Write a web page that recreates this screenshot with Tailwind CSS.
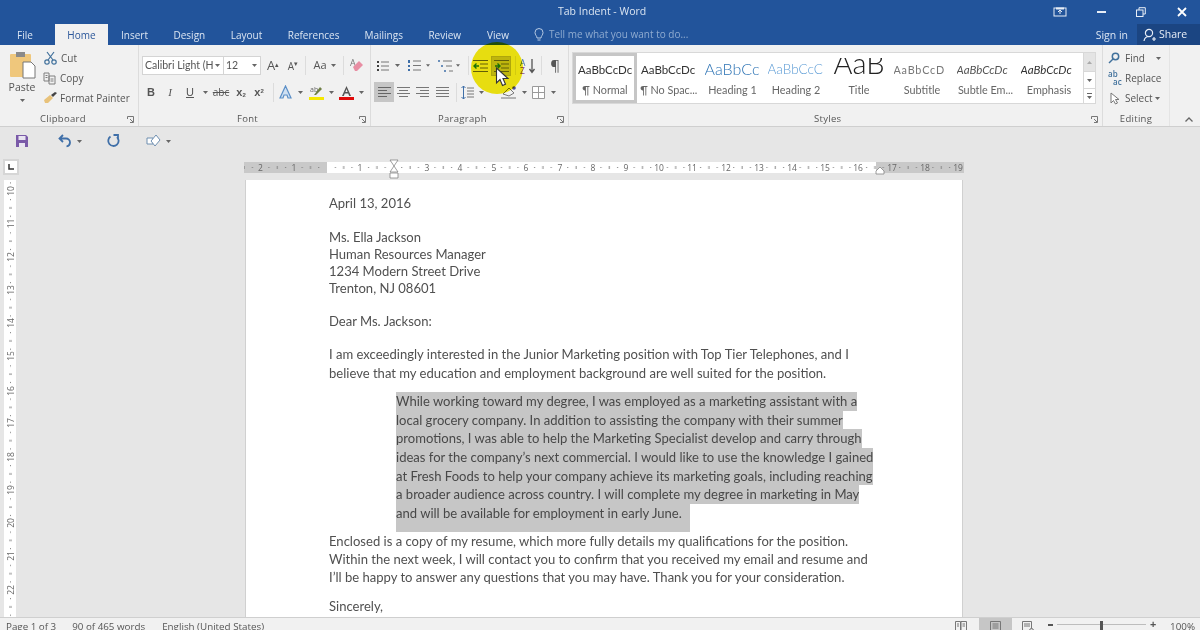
<!DOCTYPE html>
<html lang="en">
<head>
  <meta charset="UTF-8">
  <title>Tab Indent - Word</title>
  <script src="https://cdn.jsdelivr.net/npm/@tailwindcss/browser@4"></script>
</head>
<body class="m-0 bg-[#e6e6e6]">
<div class="relative w-[1200px] h-[630px] overflow-hidden flex flex-col font-['Open_Sans',sans-serif] text-[#555]">

  <!-- title bar -->
  <div class="h-[23px] shrink-0 bg-[#22549b] flex items-center text-[#dbe5f2] text-[10.5px]">
    <span class="ml-[558px]">Tab Indent - Word</span>
    <div class="ml-auto flex items-center">
      <svg class="w-[14px] h-[10px] mr-[30px]" viewBox="0 0 14 10" fill="none" stroke="#e8eef7"><rect x="1" y="1" width="12" height="8"/><path d="M7 7V3M5 5l2-2 2 2" /><path d="M3 1.500h8" stroke-width="2"/></svg>
      <div class="w-[9px] h-[2px] bg-[#e8eef7] mr-[30px]"></div>
      <svg class="w-[10px] h-[10px] mr-[31px]" viewBox="0 0 10 10" fill="none" stroke="#e8eef7"><rect x="0.500" y="3" width="6.500" height="6.500"/><path d="M3 3V.7h6.300V7H7" /></svg>
      <svg class="w-[10px] h-[10px] mr-[13px]" viewBox="0 0 10 10" stroke="#fff" stroke-width="1.800"><path d="M1 1l8 8M9 1l-8 8"/></svg>
    </div>
  </div>

  <!-- tabs -->
  <div class="h-[22px] shrink-0 bg-[#22549b] flex items-end text-[10px] text-[#dbe5f2]">
    <span class="h-[21px] leading-[23px] pl-[17px] w-[55px]">File</span>
    <span class="h-[21px] leading-[22px] w-[53px] text-center bg-[#f1f1f1] text-[#2b579a]">Home</span>
    <span class="h-[21px] leading-[22px] px-[13px]">Insert</span>
    <span class="h-[21px] leading-[22px] px-[12.500px]">Design</span>
    <span class="h-[21px] leading-[22px] px-[13px]">Layout</span>
    <span class="h-[21px] leading-[22px] px-[12.500px]">References</span>
    <span class="h-[21px] leading-[22px] px-[12.500px]">Mailings</span>
    <span class="h-[21px] leading-[22px] px-[13px]">Review</span>
    <span class="h-[21px] leading-[22px] px-[13px]">View</span>
    <div class="h-[21px] flex items-center ml-[12px] text-[#8fabd0]">
      <svg class="w-[10px] h-[14px] mr-[5px]" viewBox="0 0 10 14" fill="none" stroke="#b7cae3"><path d="M3 10C3 8 1 7 1 4.500a4 4 0 018 0C9 7 7 8 7 10zM3.500 12h3"/></svg>
      <span class="text-[10px]">Tell me what you want to do...</span>
    </div>
    <span class="ml-auto h-[21px] leading-[22px] mr-[9px] text-[10.500px]">Sign in</span>
    <div class="h-[21px] w-[63px] bg-[#1b4582] flex items-center pl-[6px] text-[#e8eef7] text-[10.500px]">
      <svg class="w-[13px] h-[14px] mr-[3px]" viewBox="0 0 13 14" fill="none" stroke="#e8eef7" stroke-width="1.200"><circle cx="6" cy="5" r="3.600"/><path d="M1 13c.500-3 2.500-4.500 5-4.500M9 11h4M11 9v4"/></svg>
      <span>Share</span>
    </div>
  </div>

  <!-- ribbon -->
  <div class="h-[82px] shrink-0 bg-[#f1f1f1] border-b border-[#cfcfcf] flex text-[10px]">

    <!-- clipboard -->
    <div class="w-[139px] shrink-0 border-r border-[#dcdcdc] flex flex-col">
      <div class="h-[67px] flex">
        <div class="w-[44px] flex flex-col items-center pt-[6px]">
          <svg class="w-[27px] h-[28px]" viewBox="0 0 27 28"><rect x="1" y="3" width="21" height="23" rx="1" fill="#efc77c"/><rect x="7" y="1" width="9" height="5" fill="#8a8a8a"/><path d="M14 11h8l4 4v12H14z" fill="#fff" stroke="#777"/></svg>
          <span class="leading-[15px] text-[10.500px] mt-[1px]">Paste</span>
          <svg class="w-[5px] h-[3px] mt-[4px]" viewBox="0 0 5 3"><path d="M0 0h5L2.500 3z" fill="#666"/></svg>
        </div>
        <div class="flex flex-col pt-[5px] gap-[4px]">
          <div class="h-[16px] flex items-center gap-[4px]">
            <svg class="w-[13px] h-[14px]" viewBox="0 0 13 14" fill="none" stroke="#41719c" stroke-width="1.200"><circle cx="3" cy="11" r="2.200"/><circle cx="10" cy="11" r="2.200"/><path d="M4 9L10 1M9 9L3 1"/></svg>
            <span>Cut</span>
          </div>
          <div class="h-[16px] flex items-center gap-[4px]">
            <svg class="w-[13px] h-[13px] -ml-[1px]" viewBox="0 0 13 13" fill="none" stroke="#7f7f7f"><path d="M1 1h5v8H1zM6 4h6v8H6zM2.500 3.500h2M2.500 5.500h2M7.500 7h3M7.500 9h3"/></svg>
            <span>Copy</span>
          </div>
          <div class="h-[16px] flex items-center gap-[3px] -ml-[1px]">
            <svg class="w-[14px] h-[12px]" viewBox="0 0 14 12"><path d="M1 8l6-5 3 3-5 5H2z" fill="#e8c27a"/><path d="M8 3l4-3 2 1-4 4z" fill="#444"/></svg>
            <span>Format Painter</span>
          </div>
        </div>
      </div>
      <div class="h-[14px] flex items-center text-[9.500px]">
        <span class="ml-[40px] tracking-[0.3px]">Clipboard</span>
        <svg class="w-[7px] h-[7px] ml-auto mr-[4px]" viewBox="0 0 7 7" fill="none" stroke="#777"><path d="M.5 3V.5H6.500V6.500H3M3 3l3 3"/></svg>
      </div>
    </div>

    <!-- font -->
    <div class="w-[232px] shrink-0 border-r border-[#dcdcdc] flex flex-col">
      <div class="h-[67px] flex flex-col">
        <div class="h-[19px] mt-[11px] ml-[3px] flex items-center">
          <div class="w-[82px] h-[19px] bg-white border border-[#d4d4d4] flex items-center pl-[2px] justify-between pr-[3px]">
            <span class="font-['Lato',sans-serif] text-[10.500px] whitespace-nowrap">Calibri Light (H</span>
            <svg class="w-[5px] h-[3px]" viewBox="0 0 5 3"><path d="M0 0h5L2.500 3z" fill="#666"/></svg>
          </div>
          <div class="w-[37px] h-[19px] bg-white border border-l-0 border-[#d4d4d4] flex items-center pl-[2px] justify-between pr-[3px]">
            <span class="font-['Lato',sans-serif] text-[10.500px]">12</span>
            <svg class="w-[5px] h-[3px]" viewBox="0 0 5 3"><path d="M0 0h5L2.500 3z" fill="#666"/></svg>
          </div>
          <span class="w-[22px] ml-[1px] text-center text-[13px] leading-none">A<sup class="text-[7px]">▴</sup></span>
          <span class="w-[18px] text-center text-[10px] leading-none">A<sup class="text-[7px]">▾</sup></span>
          <div class="w-px h-[19px] bg-[#dcdcdc] ml-[3px]"></div>
          <span class="w-[22px] text-center ml-[3px] text-[11px]">Aa</span>
          <svg class="w-[5px] h-[3px]" viewBox="0 0 5 3"><path d="M0 0h5L2.500 3z" fill="#666"/></svg>
          <div class="w-px h-[19px] bg-[#dcdcdc] ml-[7px]"></div>
          <svg class="w-[14px] h-[15px] ml-[6px]" viewBox="0 0 14 15"><text x="0" y="8" font-size="9" fill="#777" font-family="Open Sans">A</text><path d="M3 9l6-6 4 4-6 6H5z" fill="#e88ea3"/></svg>
        </div>
        <div class="h-[20px] mt-[7px] ml-[3px] flex items-center text-center text-[11px]">
          <b class="w-[18px] font-['Liberation_Sans',sans-serif]">B</b>
          <i class="w-[20px] font-['Liberation_Serif',serif]">I</i>
          <u class="w-[20px] font-['Liberation_Sans',sans-serif]">U</u>
          <span class="w-[10px] flex justify-center"><svg class="w-[5px] h-[3px]" viewBox="0 0 5 3"><path d="M0 0h5L2.500 3z" fill="#666"/></svg></span>
          <s class="w-[22px] text-[10px]">abc</s>
          <span class="w-[18px] font-bold font-['Liberation_Sans',sans-serif]">x<sub class="text-[6px]">2</sub></span>
          <span class="w-[18px] font-bold font-['Liberation_Sans',sans-serif]">x<sup class="text-[6px]">2</sup></span>
          <div class="w-px h-[19px] bg-[#dcdcdc] ml-[5px]"></div>
          <span class="w-[22px] flex justify-center"><svg class="w-[13px] h-[14px]" viewBox="0 0 13 14" fill="#cfe0f2" stroke="#5b8fc7" stroke-width="1.200"><path d="M6.500 1L1 13h3l1-3h3l1 3h3z"/></svg></span>
          <span class="w-[8px] flex justify-center"><svg class="w-[5px] h-[3px]" viewBox="0 0 5 3"><path d="M0 0h5L2.500 3z" fill="#666"/></svg></span>
          <span class="w-[24px] flex justify-center"><svg class="w-[15px] h-[15px]" viewBox="0 0 15 15"><text x="1" y="7" font-size="7" fill="#666" font-family="Open Sans">ab</text><path d="M5 10l6-8 2 2-6 6z" fill="#6f7f45"/><rect y="12" width="15" height="3" fill="#f6e800"/></svg></span>
          <span class="w-[6px] flex justify-center"><svg class="w-[5px] h-[3px]" viewBox="0 0 5 3"><path d="M0 0h5L2.500 3z" fill="#666"/></svg></span>
          <span class="w-[24px] flex justify-center"><svg class="w-[15px] h-[15px]" viewBox="0 0 15 15"><path d="M7.500 1L3 11h1.800l1-2.500h3.400l1 2.500H12zM6.400 7l1.100-3 1.100 3z" fill="#555" fill-rule="evenodd"/><rect y="12" width="15" height="3" fill="#e00b0b"/></svg></span>
          <span class="w-[6px] flex justify-center"><svg class="w-[5px] h-[3px]" viewBox="0 0 5 3"><path d="M0 0h5L2.500 3z" fill="#666"/></svg></span>
        </div>
      </div>
      <div class="h-[14px] flex items-center text-[9.500px]">
        <span class="ml-[98px] tracking-[0.3px]">Font</span>
        <svg class="w-[7px] h-[7px] ml-auto mr-[4px]" viewBox="0 0 7 7" fill="none" stroke="#777"><path d="M.5 3V.5H6.500V6.500H3M3 3l3 3"/></svg>
      </div>
    </div>

    <!-- paragraph -->
    <div class="w-[198px] shrink-0 border-r border-[#dcdcdc] flex flex-col">
      <div class="h-[67px] flex flex-col">
        <div class="h-[19px] mt-[11px] flex items-center">
          <span class="w-[24px] flex justify-center"><svg class="w-[13px] h-[12px]" viewBox="0 0 13 12" stroke="#777"><path d="M5 2h8M5 6h8M5 10h8"/><path d="M1 2h2M1 6h2M1 10h2" stroke="#3f3f3f" stroke-width="2"/></svg></span>
          <span class="w-[6px] flex justify-center"><svg class="w-[5px] h-[3px]" viewBox="0 0 5 3"><path d="M0 0h5L2.500 3z" fill="#666"/></svg></span>
          <span class="w-[28px] flex justify-center"><svg class="w-[13px] h-[13px]" viewBox="0 0 13 13" stroke="#777"><path d="M5 2h8M5 6.500h8M5 11h8"/><path d="M1 1v3M1 6v2M1 10v2" stroke="#3f6fa8" stroke-width="2"/></svg></span>
          <span class="w-[4px] flex justify-center -ml-[2px]"><svg class="w-[5px] h-[3px]" viewBox="0 0 5 3"><path d="M0 0h5L2.500 3z" fill="#666"/></svg></span>
          <span class="w-[28px] ml-[3px] flex justify-center"><svg class="w-[17px] h-[14px]" viewBox="0 0 17 14" stroke="#777"><path d="M5 2h9M8 7h6M11 12h4"/><path d="M1 1v2M4 6v2M7 11v2" stroke="#3f6fa8" stroke-width="1.500"/></svg></span>
          <span class="w-[4px] flex justify-center -ml-[5px]"><svg class="w-[5px] h-[3px]" viewBox="0 0 5 3"><path d="M0 0h5L2.500 3z" fill="#666"/></svg></span>
          <div class="w-px h-[19px] bg-[#dcdcdc] ml-[8px]"></div>
          <span class="w-[19px] h-[19px] ml-[3px] flex items-center justify-center"><svg class="w-[15px] h-[12px]" viewBox="0 0 15 12" stroke="#666"><path d="M0 .5h15M7 4h8M7 8h8M0 11.500h15"/><path d="M6 6H1M3.500 3.500L1 6l2.500 2.500" stroke="#1a7a3c" stroke-width="1.400" fill="none"/></svg></span>
          <span class="w-[20px] h-[20px] ml-[1px] bg-[#c6c6c6] border border-[#b5b5b5] flex items-center justify-center"><svg class="w-[15px] h-[12px]" viewBox="0 0 15 12" stroke="#666"><path d="M0 .5h15M7 4h8M7 8h8M0 11.500h15"/><path d="M1 6h5M3.500 3.500L6 6 3.500 8.500" stroke="#1a7a3c" stroke-width="1.400" fill="none"/></svg></span>
          <div class="w-px h-[19px] bg-[#dcdcdc] ml-[4px]"></div>
          <span class="w-[26px] flex justify-center"><svg class="w-[17px] h-[16px]" viewBox="0 0 17 16"><text x="0" y="7.500" font-size="8.500" fill="#3f6fa8" font-family="Open Sans">A</text><text x="0" y="15.500" font-size="8.500" fill="#7b3fa0" font-family="Open Sans">Z</text><path d="M12 1v13M9.500 11l2.500 3.500 2.500-3.500" stroke="#555" fill="none" stroke-width="1.300"/></svg></span>
          <div class="w-px h-[19px] bg-[#dcdcdc]"></div>
          <span class="w-[26px] text-center text-[15px] leading-none">¶</span>
        </div>
        <div class="h-[20px] mt-[7px] flex items-center">
          <span class="w-[20px] h-[20px] ml-[3px] bg-[#c6c6c6] flex items-center justify-center"><svg class="w-[13px] h-[10px]" viewBox="0 0 13 10" stroke="#666"><path d="M0 .5h13M0 3.500h9M0 6.500h13M0 9.500h9"/></svg></span>
          <span class="w-[19px] flex justify-center"><svg class="w-[13px] h-[10px]" viewBox="0 0 13 10" stroke="#777"><path d="M0 .5h13M2 3.500h9M0 6.500h13M2 9.500h9"/></svg></span>
          <span class="w-[19px] flex justify-center"><svg class="w-[13px] h-[10px]" viewBox="0 0 13 10" stroke="#777"><path d="M0 .5h13M4 3.500h9M0 6.500h13M4 9.500h9"/></svg></span>
          <span class="w-[20px] flex justify-center"><svg class="w-[13px] h-[10px]" viewBox="0 0 13 10" stroke="#777"><path d="M0 .5h13M0 3.500h13M0 6.500h13M0 9.500h13"/></svg></span>
          <div class="w-px h-[19px] bg-[#dcdcdc] ml-[4px]"></div>
          <span class="w-[21px] flex justify-center"><svg class="w-[13px] h-[15px]" viewBox="0 0 13 15" stroke="#777"><path d="M6 3h7M6 6h7M6 9h7M6 12h7"/><path d="M2.500 1v13M.5 3l2-2 2 2M.5 12l2 2 2-2" stroke="#3f6fa8" fill="none"/></svg></span>
          <span class="w-[6px] flex justify-center"><svg class="w-[5px] h-[3px]" viewBox="0 0 5 3"><path d="M0 0h5L2.500 3z" fill="#666"/></svg></span>
          <span class="w-[33px] ml-[1px] flex justify-end"><svg class="w-[18px] h-[14px]" viewBox="0 0 18 14" fill="none" stroke="#777"><path d="M1 13h15M3 9l6-6 5 5-5 3z"/><circle cx="14" cy="3" r="1.800" fill="#4a4aa0" stroke="none"/></svg></span>
          <span class="w-[12px] flex justify-center"><svg class="w-[5px] h-[3px]" viewBox="0 0 5 3"><path d="M0 0h5L2.500 3z" fill="#666"/></svg></span>
          <span class="w-[16px] flex justify-center"><svg class="w-[13px] h-[13px]" viewBox="0 0 13 13" fill="#fff" stroke="#9a9a9a"><path d="M.5.500h12v12H.500zM6.500.500v12M.5 6.500h12"/></svg></span>
          <span class="w-[14px] flex justify-center"><svg class="w-[5px] h-[3px]" viewBox="0 0 5 3"><path d="M0 0h5L2.500 3z" fill="#666"/></svg></span>
        </div>
      </div>
      <div class="h-[14px] flex items-center text-[9.500px]">
        <span class="ml-[67px] tracking-[0.3px]">Paragraph</span>
        <svg class="w-[7px] h-[7px] ml-auto mr-[4px]" viewBox="0 0 7 7" fill="none" stroke="#777"><path d="M.5 3V.5H6.500V6.500H3M3 3l3 3"/></svg>
      </div>
    </div>

    <!-- styles -->
    <div class="w-[534px] shrink-0 border-r border-[#dcdcdc] flex flex-col">
      <div class="h-[67px] flex pt-[7px] pl-[3px]">
        <div class="h-[52px] w-[512px] bg-white border border-[#d8d8d8] flex font-['Lato',sans-serif] text-[10.800px] text-center">
          <div class="w-[64px] shrink-0 border-[3px] border-[#c6c6c6] flex flex-col text-[#333]">
            <div class="h-[26px] leading-[28px] overflow-hidden whitespace-nowrap pl-[2px] text-left text-[11.500px]">AaBbCcDc</div>
            <div class="leading-[15px] text-[#666]">¶ Normal</div>
          </div>
          <div class="w-[63.500px] shrink-0 flex flex-col pt-[3px] text-[#333]">
            <div class="h-[26px] leading-[28px] overflow-hidden whitespace-nowrap mx-[4px] text-left text-[11.500px]">AaBbCcDc</div>
            <div class="leading-[15px] text-[#666]">¶ No Spac...</div>
          </div>
          <div class="w-[64px] shrink-0 flex flex-col pt-[3px] text-[#2e74b5]">
            <div class="h-[26px] leading-[26px] overflow-hidden whitespace-nowrap mx-[4px] text-left text-[16px] font-light">AaBbCc</div>
            <div class="leading-[15px] text-[#666]">Heading 1</div>
          </div>
          <div class="w-[63px] shrink-0 flex flex-col pt-[3px] text-[#5b9bd5]">
            <div class="h-[26px] leading-[27px] overflow-hidden whitespace-nowrap mx-[3px] text-left text-[13.500px] font-light">AaBbCcC</div>
            <div class="leading-[15px] text-[#666]">Heading 2</div>
          </div>
          <div class="w-[63px] shrink-0 flex flex-col pt-[5px] text-[#222]">
            <div class="h-[24px] leading-[9px] overflow-hidden whitespace-nowrap text-[29px] font-light">AaB</div>
            <div class="leading-[15px] text-[#666]">Title</div>
          </div>
          <div class="w-[63px] shrink-0 flex flex-col pt-[3px] text-[#777]">
            <div class="h-[26px] leading-[28px] overflow-hidden whitespace-nowrap mx-[3px] text-left tracking-[0.8px]">AaBbCcD</div>
            <div class="leading-[15px] text-[#666]">Subtitle</div>
          </div>
          <div class="w-[64px] shrink-0 flex flex-col pt-[3px] text-[#555] italic">
            <div class="h-[26px] leading-[28px] overflow-hidden whitespace-nowrap mx-[3px] text-left text-[11.500px]">AaBbCcDc</div>
            <div class="leading-[15px] text-[#666] not-italic">Subtle Em...</div>
          </div>
          <div class="w-[63px] shrink-0 flex flex-col pt-[3px] text-[#333] italic">
            <div class="h-[26px] leading-[28px] overflow-hidden whitespace-nowrap mx-[3px] text-left text-[11.500px]">AaBbCcDc</div>
            <div class="leading-[15px] text-[#666] not-italic">Emphasis</div>
          </div>
        </div>
        <div class="w-[12px] h-[52px] flex flex-col border border-l-0 border-[#d8d8d8]">
          <div class="h-[19px] bg-[#e4e4e4] border-b border-[#d8d8d8] flex items-center justify-center"><svg class="w-[5px] h-[3px]" viewBox="0 0 5 3"><path d="M0 3h5L2.500 0z" fill="#aaa"/></svg></div>
          <div class="h-[17px] bg-white border-b border-[#d8d8d8] flex items-center justify-center"><svg class="w-[5px] h-[3px]" viewBox="0 0 5 3"><path d="M0 0h5L2.500 3z" fill="#666"/></svg></div>
          <div class="flex-1 bg-white flex items-center justify-center"><svg class="w-[5px] h-[6px]" viewBox="0 0 5 6"><path d="M0 3h5L2.500 6zM0 0h5v1H0z" fill="#666"/></svg></div>
        </div>
      </div>
      <div class="h-[14px] flex items-center text-[9.500px]">
        <span class="ml-[245px] tracking-[0.3px]">Styles</span>
        <svg class="w-[7px] h-[7px] ml-auto mr-[4px]" viewBox="0 0 7 7" fill="none" stroke="#777"><path d="M.5 3V.5H6.500V6.500H3M3 3l3 3"/></svg>
      </div>
    </div>

    <!-- editing -->
    <div class="w-[67px] shrink-0 border-r border-[#e4e4e4] flex flex-col">
      <div class="h-[67px] flex flex-col pt-[5px] pl-[5px] gap-[4px]">
        <div class="h-[16px] flex items-center gap-[5px]">
          <svg class="w-[12px] h-[12px]" viewBox="0 0 12 12" fill="none" stroke="#41719c" stroke-width="1.500"><circle cx="7.500" cy="4.500" r="3.200"/><path d="M5 7l-4 4"/></svg>
          <span>Find</span>
          <svg class="w-[5px] h-[3px] ml-[6px]" viewBox="0 0 5 3"><path d="M0 0h5L2.500 3z" fill="#666"/></svg>
        </div>
        <div class="h-[16px] flex items-center gap-[2px]">
          <span class="w-[15px] text-[8px] leading-[8px] text-[#41719c] font-semibold">ab<br><span class="pl-[5px]">ac</span></span>
          <span>Replace</span>
        </div>
        <div class="h-[16px] flex items-center gap-[5px] pl-[2px]">
          <svg class="w-[10px] h-[13px]" viewBox="0 0 10 13" fill="#fff" stroke="#777"><path d="M1 1v10l2.500-2.500L5.500 12l2-1-2-3.500H9z"/></svg>
          <span>Select</span>
          <svg class="w-[5px] h-[3px] -ml-[3px]" viewBox="0 0 5 3"><path d="M0 0h5L2.500 3z" fill="#666"/></svg>
        </div>
      </div>
      <div class="h-[14px] flex items-center justify-center text-[9.500px] tracking-[0.3px]">Editing</div>
    </div>

    <div class="flex-1 flex items-end justify-end pb-[4px] pr-[7px]">
      <svg class="w-[8px] h-[5px]" viewBox="0 0 8 5" fill="none" stroke="#666" stroke-width="1.300"><path d="M.5 4.500L4 1l3.500 3.500"/></svg>
    </div>
  </div>

  <!-- quick access -->
  <div class="h-[28px] shrink-0 flex items-center pl-[15px]">
    <svg class="w-[14px] h-[14px]" viewBox="0 0 14 14"><path d="M1 1h10l2 2v10H1z" fill="#7a5aa8"/><rect x="3.500" y="2" width="7" height="4" fill="#e8e4f0"/><rect x="4" y="9" width="6" height="4" fill="#e8e4f0"/></svg>
    <svg class="w-[14px] h-[14px] ml-[29px]" viewBox="0 0 14 14" fill="none" stroke="#3f6fa8" stroke-width="1.800"><path d="M5 1L1.500 4.500 5 8M2 4.500h6a4 4 0 014 4c0 2-1.500 3.500-3.500 4"/></svg>
    <svg class="w-[5px] h-[3px] ml-[5px]" viewBox="0 0 5 3"><path d="M0 0h5L2.500 3z" fill="#666"/></svg>
    <svg class="w-[13px] h-[14px] ml-[25px]" viewBox="0 0 13 14" fill="none" stroke="#3f6fa8" stroke-width="1.800"><path d="M3.500 2.500A5.200 5.200 0 1010 3M6.500 1h4.500v4.500"/></svg>
    <svg class="w-[15px] h-[14px] ml-[26px]" viewBox="0 0 15 14" fill="#fff" stroke="#6f8fb0"><path d="M1 4h6v6H1z"/><path d="M10 1l4 5-5 6-4-5z" /></svg>
    <svg class="w-[5px] h-[3px] ml-[5px]" viewBox="0 0 5 3"><path d="M0 0h5L2.500 3z" fill="#666"/></svg>
  </div>

  <!-- ruler row -->
  <div class="h-[25px] shrink-0 flex items-start pt-[4px]">
    <div class="w-[16px] h-[16px] ml-[3px] bg-[#d6d6d6] flex items-center justify-center">
      <div class="w-[12px] h-[12px] bg-white flex items-center justify-center"><svg class="w-[6px] h-[6px]" viewBox="0 0 6 6" fill="none" stroke="#333" stroke-width="1.500"><path d="M1 0v5h5"/></svg></div>
    </div>
    <svg class="w-[724px] h-[18px] ml-[225px] mt-[1px] overflow-visible" viewBox="0 0 724 18" font-family="Open Sans" font-size="8.500" fill="#666" text-anchor="middle">
      <defs>
        <pattern id="hticks" x="16.500" y="0" width="33.200" height="13" patternUnits="userSpaceOnUse">
          <rect x="8" y="7" width="1" height="1" fill="#777"/><rect x="16.300" y="6" width="1" height="3" fill="#888"/><rect x="24.600" y="7" width="1" height="1" fill="#777"/>
        </pattern>
      </defs>
      <rect width="720" height="11" y="2" fill="#c9c9c9"/>
      <rect x="83" width="549" height="11" y="2" fill="#fff"/>
      <rect width="720" height="13" y="0" fill="url(#hticks)"/>
      <g transform="translate(0 10.500)">
        <text x="16.500">2</text><text x="50">1</text><text x="116">1</text><text x="183">3</text><text x="216">4</text><text x="250">5</text><text x="282">6</text><text x="316">7</text><text x="349">8</text><text x="382">9</text><text x="415">10</text><text x="448">11</text><text x="482">12</text><text x="515">13</text><text x="548">14</text><text x="581">15</text><text x="614">16</text><text x="648">17</text><text x="681">18</text><text x="714">19</text>
      </g>
      <path d="M146 0h8l-4 6 4 6h-8l4-6zM146 13h8v5h-8z" fill="#fff" stroke="#777" stroke-width=".7"/>
      <path d="M632 11l4-4 4 4v3h-8z" fill="#fff" stroke="#777" stroke-width=".7"/>
    </svg>
  </div>

  <!-- document area -->
  <div class="flex-1 min-h-0 flex overflow-hidden">
    <svg class="w-[12px] h-[437px] ml-[4px] shrink-0" viewBox="0 0 12 437" font-family="Open Sans" font-size="8.500" fill="#666" text-anchor="middle">
      <defs>
        <pattern id="vticks" x="0" y="11.200" width="12" height="33.250" patternUnits="userSpaceOnUse">
          <rect x="6" y="8" width="1" height="1" fill="#777"/><rect x="5" y="16.200" width="3" height="1" fill="#888"/><rect x="6" y="24.500" width="1" height="1" fill="#777"/>
        </pattern>
      </defs>
      <rect width="12" height="437" fill="#fff"/>
      <rect width="12" height="437" fill="url(#vticks)"/>
      <text transform="translate(9.500 11) rotate(-90)">10</text><text transform="translate(9.500 43.500) rotate(-90)">11</text><text transform="translate(9.500 77) rotate(-90)">12</text><text transform="translate(9.500 110) rotate(-90)">13</text><text transform="translate(9.500 143) rotate(-90)">14</text><text transform="translate(9.500 176) rotate(-90)">15</text><text transform="translate(9.500 211) rotate(-90)">16</text><text transform="translate(9.500 243) rotate(-90)">17</text><text transform="translate(9.500 277) rotate(-90)">18</text><text transform="translate(9.500 310) rotate(-90)">19</text><text transform="translate(9.500 343) rotate(-90)">20</text><text transform="translate(9.500 376) rotate(-90)">21</text><text transform="translate(9.500 410) rotate(-90)">22</text>
    </svg>

    <div class="w-[718px] ml-[229px] shrink-0 bg-white border-l border-r border-[#d0d0d0] pl-[83px] pt-[14px] font-['Lato',sans-serif] text-[13.050px] text-[#505050] whitespace-nowrap">
      <p class="leading-[18px]">April 13, 2016</p>
      <div class="mt-[17px] leading-[17px]">
        <p>Ms. Ella Jackson</p>
        <p>Human Resources Manager</p>
        <p>1234 Modern Street Drive</p>
        <p>Trenton, NJ 08601</p>
      </div>
      <p class="mt-[16px] leading-[17px]">Dear Ms. Jackson:</p>
      <div class="mt-[15px] leading-[18.500px]">
        <p>I am exceedingly interested in the Junior Marketing position with Top Tier Telephones, and I</p>
        <p>believe that my education and employment background are well suited for the position.</p>
      </div>
      <div class="mt-[10px] ml-[67px] leading-[18.670px] text-[#484848]">
        <p class="w-fit bg-[#c6c6c6]">While working toward my degree, I was employed as a marketing assistant with a</p>
        <p class="w-fit bg-[#c6c6c6]">local grocery company. In addition to assisting the company with their summer</p>
        <p class="w-fit bg-[#c6c6c6]">promotions, I was able to help the Marketing Specialist develop and carry through</p>
        <p class="w-fit bg-[#c6c6c6]">ideas for the company’s next commercial. I would like to use the knowledge I gained</p>
        <p class="w-fit bg-[#c6c6c6]">at Fresh Foods to help your company achieve its marketing goals, including reaching</p>
        <p class="w-fit bg-[#c6c6c6]">a broader audience across country. I will complete my degree in marketing in May</p>
        <p class="w-fit bg-[#c6c6c6] pb-[9px] pr-[8px]">and will be available for employment in early June.</p>
      </div>
      <div class="leading-[18px]">
        <p>Enclosed is a copy of my resume, which more fully details my qualifications for the position.</p>
        <p>Within the next week, I will contact you to confirm that you received my email and resume and</p>
        <p>I’ll be happy to answer any questions that you may have. Thank you for your consideration.</p>
      </div>
      <p class="mt-[11px] leading-[18px]">Sincerely,</p>
    </div>
  </div>

  <!-- status bar -->
  <div class="h-[13px] shrink-0 bg-[#f1f1f1] border-t border-[#cfcfcf] flex items-start text-[9.800px] leading-[17px] text-[#555] overflow-hidden">
    <span class="ml-[6px]">Page 1 of 3</span>
    <span class="ml-[16px]">90 of 465 words</span>
    <span class="ml-[17px]">English (United States)</span>
    <div class="ml-auto flex items-start h-[13px]">
      <svg class="w-[12px] h-[12px] mt-[3px]" viewBox="0 0 12 12" fill="none" stroke="#777"><path d="M.5.500h5v11h-5zM6 .5h5.500v11H6zM2 3h2M2 5h2M7.500 3h2.500M7.500 5h2.500"/></svg>
      <div class="w-[33px] h-[13px] ml-[12px] bg-[#c6c6c6] flex justify-center"><svg class="w-[11px] h-[12px] mt-[3px]" viewBox="0 0 11 12" fill="none" stroke="#777"><path d="M.5.500h10v11H.5zM2.500 3h6M2.500 5h6M2.500 7h6"/></svg></div>
      <svg class="w-[12px] h-[12px] mt-[3px] ml-[10px]" viewBox="0 0 12 12" fill="none" stroke="#777"><path d="M.5.500h9v11H.5zM2 3h6M2 5h6"/><circle cx="9.500" cy="9.500" r="2" fill="#ddd"/></svg>
      <div class="w-[5px] h-[1.500px] bg-[#555] mt-[6px] ml-[14px]"></div>
      <div class="w-[89px] h-[1px] bg-[#bdbdbd] mt-[6px] ml-[4px] flex justify-center"><div class="w-[3px] h-[12px] -mt-[3px] bg-[#555]"></div></div>
      <span class="ml-[3px] w-[8px] text-center text-[11px] leading-[12px] font-bold">+</span>
      <span class="ml-[13px] mr-[5px] leading-[17px]">100%</span>
    </div>
  </div>

  <!-- yellow cursor highlight from the recording -->
  <div class="absolute left-[471px] top-[42px] w-[52px] h-[52px] rounded-full bg-[#f5ea10] mix-blend-multiply"></div>
  <svg class="absolute left-[495px] top-[67px] w-[15px] h-[21px]" viewBox="0 0 15 21"><path d="M1.500 1v15l3.500-3.500 2.500 6 3-1.300-2.500-5.700h5z" fill="#fff" stroke="#333" stroke-width="1.100"/></svg>
</div>
</body>
</html>
